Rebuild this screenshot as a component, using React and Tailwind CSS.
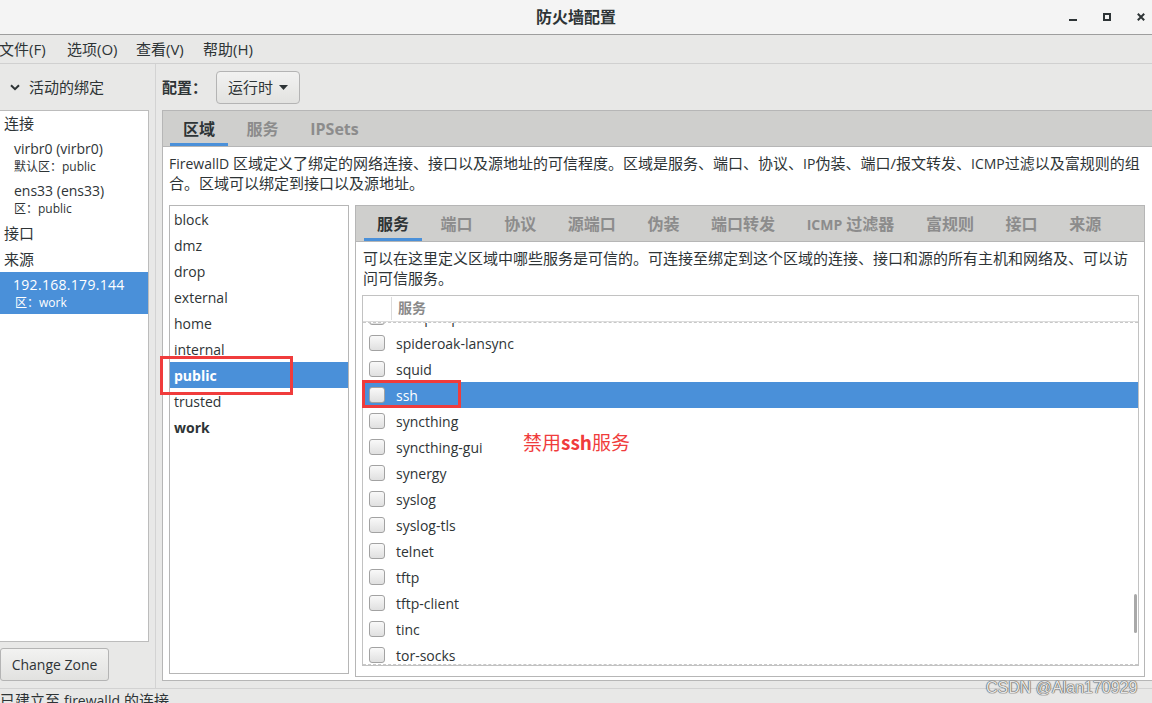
import React from "react";

const zones = ["block", "dmz", "drop", "external", "home", "internal", "public", "trusted", "work"];
const services = [
  "snmptrap",
  "spideroak-lansync",
  "squid",
  "ssh",
  "syncthing",
  "syncthing-gui",
  "synergy",
  "syslog",
  "syslog-tls",
  "telnet",
  "tftp",
  "tftp-client",
  "tinc",
  "tor-socks",
  "transmission-client",
];
const innerTabs = ["服务", "端口", "协议", "源端口", "伪装", "端口转发", "ICMP", "富规则", "接口", "来源"];

function Checkbox() {
  return (
    <span className="block w-[16px] h-[16px] shrink-0 rounded-[3px] border border-[#a2a2a2] bg-linear-to-b from-[#f9f9f9] to-[#e0e0e0]" />
  );
}

function Tab({ label, active }) {
  return (
    <div
      className={
        active
          ? "relative h-full flex items-center pl-[16px] pr-[15.6px] text-[16px] font-bold whitespace-nowrap text-[#2e3436]"
          : "relative h-full flex items-center pl-[16px] pr-[15.6px] text-[16px] font-bold whitespace-nowrap text-[#8c8c8c]"
      }
    >
      {label === "ICMP" ? (
        <span>
          <span className="text-[14px]">ICMP</span> 过滤器
        </span>
      ) : (
        label
      )}
      {active && <span className="absolute left-[3px] right-[3px] bottom-0 h-[3px] bg-[#4a90d9]" />}
    </div>
  );
}

export default function App() {
  return (
    <div className="relative w-[1152px] h-[703px] overflow-hidden flex flex-col bg-[#e8e8e7] text-[#2e3436] font-['Open_Sans','Noto_Sans_CJK_SC',sans-serif]">
      {/* Title bar */}
      <div className="h-[35px] shrink-0 bg-[#f4f4f4] border-b border-[#9e9e9e] grid grid-cols-[1fr_auto_1fr] items-center">
        <div />
        <div className="text-[16px] font-bold leading-[20px]">防火墙配置</div>
        <div className="flex justify-end items-center gap-[26px] pr-[7px]">
          <div className="w-[8px] h-[8px] flex items-end">
            <div className="w-[8px] h-[2px] bg-[#2e3436]" />
          </div>
          <div className="w-[8px] h-[8px] border-2 border-[#2e3436]" />
          <svg width="8" height="8" viewBox="0 0 8 8">
            <path d="M0.8 0.8 L7.2 7.2 M7.2 0.8 L0.8 7.2" stroke="#2e3436" strokeWidth="2" />
          </svg>
        </div>
      </div>

      {/* Menu bar */}
      <div className="h-[29px] shrink-0 border-b border-[#d0d0d0] bg-[#e8e8e7] flex items-center text-[15px] leading-[20px] -ml-[1px]">
        <span className="w-[68px]">文件(F)</span>
        <span className="w-[69px]">选项(O)</span>
        <span className="w-[67px]">查看(V)</span>
        <span>帮助(H)</span>
      </div>

      {/* Main */}
      <div className="h-[624px] shrink-0 flex">
        {/* Left panel */}
        <div className="w-[156px] shrink-0 border-r border-[#d3d3d3] flex flex-col">
          <div className="h-[46px] shrink-0 flex items-center pl-[10px] gap-[9px]">
            <svg width="10" height="7" viewBox="0 0 10 7">
              <path d="M1 1.2 L5 5.2 L9 1.2" stroke="#2e3436" strokeWidth="2" fill="none" />
            </svg>
            <span className="text-[15px] leading-[20px]">活动的绑定</span>
          </div>
          <div className="w-[149px] h-[532px] shrink-0 bg-white border-y border-r border-[#bcbcbc]">
            <div className="h-[25px] flex items-center pl-[4px] text-[15px]">连接</div>
            <div className="h-[42px] pl-[14px] pt-[4px]">
              <div className="h-[18px] leading-[18px] text-[14px]">virbr0 (virbr0)</div>
              <div className="h-[18px] leading-[18px] text-[12px]">默认区：public</div>
            </div>
            <div className="h-[42px] pl-[14px] pt-[4px]">
              <div className="h-[18px] leading-[18px] text-[14px]">ens33 (ens33)</div>
              <div className="h-[18px] leading-[18px] text-[12px]">区：public</div>
            </div>
            <div className="h-[26px] flex items-center pl-[4px] text-[15px]">接口</div>
            <div className="h-[26px] flex items-center pl-[4px] text-[15px]">来源</div>
            <div className="h-[42px] pt-[4px] bg-[#4a90d9] text-white">
              <div className="h-[18px] leading-[18px] text-[14px] pl-[13px] tracking-[0.3px]">192.168.179.144</div>
              <div className="h-[18px] leading-[18px] text-[12px] pl-[15px]">区：work</div>
            </div>
          </div>
          <div className="mt-[6px] w-[109px] h-[33px] shrink-0 rounded-[3px] border border-[#b4b4b4] bg-linear-to-b from-[#f2f2f1] to-[#e2e2e0] flex items-center justify-center text-[14px]">
            Change Zone
          </div>
        </div>

        {/* Right pane */}
        <div className="flex-1 min-w-0 pl-[6px] flex flex-col">
          <div className="h-[46px] shrink-0 flex items-center">
            <span className="text-[15px] font-bold leading-[20px]">配置：</span>
            <div className="ml-[9px] h-[33px] px-[11px] flex items-center gap-[6px] rounded-[4px] border border-[#b4b4b4] bg-linear-to-b from-[#f2f2f1] to-[#e2e2e0]">
              <span className="text-[15px] leading-[20px]">运行时</span>
              <svg width="9" height="5" viewBox="0 0 9 5">
                <polygon points="0,0 9,0 4.5,5" fill="#2e3436" />
              </svg>
            </div>
          </div>

          {/* Outer notebook */}
          <div className="h-[571px] shrink-0 border-t border-l border-b border-[#b6b6b6] flex flex-col">
            <div className="h-[36px] shrink-0 bg-[#cfcfcd] border-b border-[#b6b6b6] flex pl-[4px]">
              <Tab label="区域" active />
              <Tab label="服务" />
              <Tab label="IPSets" />
            </div>
            <div className="flex-1 bg-white pl-[6px] pt-[6px]">
              <div className="h-[20px] overflow-visible text-[15px] leading-[20px] whitespace-nowrap">
                <span className="text-[14px]">FirewallD</span> 区域定义了绑定的网络连接、接口以及源地址的可信程度。区域是服务、端口、协议、<span className="text-[14px]">IP</span>伪装、端口/报文转发、<span className="text-[14px]">ICMP</span>过滤以及富规则的组
              </div>
              <div className="h-[20px] text-[15px] leading-[20px] whitespace-nowrap">合。区域可以绑定到接口以及源地址。</div>

              <div className="mt-[12px] flex items-start">
                {/* Zone list */}
                <div className="w-[180px] h-[469px] shrink-0 bg-white border border-[#b6b6b6]">
                  {zones.map((z) =>
                    z === "public" ? (
                      <div key={z} className="h-[26px] flex items-center pl-[4px] text-[14px] font-bold bg-[#4a90d9] text-white">
                        {z}
                      </div>
                    ) : z === "work" ? (
                      <div key={z} className="h-[26px] flex items-center pl-[4px] text-[14px] font-bold">
                        {z}
                      </div>
                    ) : (
                      <div key={z} className="h-[26px] flex items-center pl-[4px] text-[14px]">
                        {z}
                      </div>
                    )
                  )}
                </div>

                {/* Inner notebook */}
                <div className="ml-[6px] w-[790px] h-[472px] shrink-0 border border-[#b6b6b6] flex flex-col">
                  <div className="h-[36px] shrink-0 bg-[#cfcfcd] border-b border-[#b6b6b6] flex pl-[5px]">
                    {innerTabs.map((t, i) => (
                      <Tab key={t} label={t} active={i === 0} />
                    ))}
                  </div>
                  <div className="flex-1 bg-white pt-[6px]">
                    <div className="h-[20px] px-[7px] text-[15px] leading-[20px] whitespace-nowrap">
                      可以在这里定义区域中哪些服务是可信的。可连接至绑定到这个区域的连接、接口和源的所有主机和网络及、可以访
                    </div>
                    <div className="h-[20px] px-[7px] text-[15px] leading-[20px] whitespace-nowrap">问可信服务。</div>

                    {/* Service tree */}
                    <div className="mt-[7px] ml-[6px] w-[777px] h-[371px] border border-[#c2c2c2] flex flex-col">
                      <div className="h-[26px] shrink-0 flex border-b border-[#dcdcdc]">
                        <div className="w-[29px] border-r border-[#dcdcdc] my-[1px]" />
                        <div className="pl-[6px] pb-[3px] flex items-center text-[14px] font-bold text-[#8a8a8a]">服务</div>
                      </div>
                      <div className="relative h-[343px] overflow-hidden border-t border-b border-dashed border-[#c8c8c8]">
                        <div className="-mt-[19px]">
                          {services.map((s) =>
                            s === "ssh" ? (
                              <div key={s} className="h-[26px] flex items-center pl-[6px] gap-[11px] bg-[#4a90d9] text-white text-[14px]">
                                <Checkbox />
                                <span>{s}</span>
                              </div>
                            ) : (
                              <div key={s} className="h-[26px] flex items-center pl-[6px] gap-[11px] text-[14px]">
                                <Checkbox />
                                <span>{s}</span>
                              </div>
                            )
                          )}
                        </div>
                        <div className="absolute right-[1px] top-[271px] w-[3px] h-[39px] rounded-full bg-[#a9a9a9]" />
                      </div>
                    </div>
                  </div>
                </div>
              </div>
            </div>
          </div>
        </div>
      </div>

      {/* Status bar */}
      <div className="h-[24px] shrink-0 border-t border-[#d2d2d2] pt-[1px] text-[15px] leading-[20px] whitespace-nowrap">
        已建立至 <span className="text-[14px]">firewalld</span> 的连接
      </div>

      {/* Annotations */}
      <div className="absolute left-[160px] top-[356px] w-[133px] h-[39px] border-[3px] border-[#f03c3c]" />
      <div className="absolute left-[362px] top-[380px] w-[99px] h-[28px] border-[3px] border-[#f03c3c]" />
      <div className="absolute left-[523px] top-[430px] text-[19px] leading-[23px] text-[#f03c3c] font-['Noto_Sans_CJK_SC',sans-serif]">
        禁用<span className="font-bold">ssh</span>服务
      </div>
      <div className="absolute left-[986px] top-[679px] text-[16px] leading-[18px] text-[#e4e4e4] font-['Liberation_Sans',sans-serif] [text-shadow:0_0_1px_#555,0_0_1px_#555,0_0_1px_#555]">
        CSDN @Alan170929
      </div>
    </div>
  );
}
